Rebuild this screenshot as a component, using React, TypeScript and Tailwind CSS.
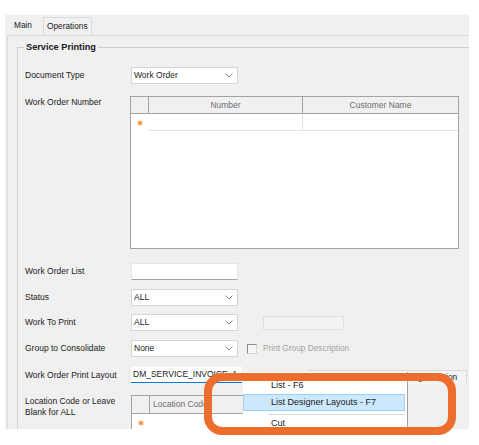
import React from "react";

const Chevron = () => (
  <svg width="8" height="5" viewBox="0 0 8 5" className="shrink-0">
    <path d="M0.5 0.5 L4 4 L7.5 0.5" fill="none" stroke="#8a8a8a" strokeWidth="1" />
  </svg>
);

const Star = () => (
  <svg width="6" height="6" viewBox="0 0 6 6">
    <g stroke="#f59443" strokeWidth="1.3" strokeLinecap="round">
      <line x1="3" y1="0.9" x2="3" y2="5.1" />
      <line x1="1.1" y1="1.9" x2="4.9" y2="4.1" />
      <line x1="1.1" y1="4.1" x2="4.9" y2="1.9" />
    </g>
  </svg>
);

const Combo = ({ value }: { value: string }) => (
  <div className="w-[107px] h-[17px] bg-white border border-[#d4d4d4] flex items-center justify-between pl-[2px] pr-[4px] text-[8.5px] text-[#1a1a1a]">
    <span>{value}</span>
    <Chevron />
  </div>
);

export default function App() {
  return (
    <div
      className="w-[479px] h-[445px] bg-white relative overflow-hidden text-[#1a1a1a]"
      style={{ fontFamily: '"Liberation Sans", Arial, sans-serif' }}
    >
      <div className="ml-[5px] mt-[15px] w-[464px] h-[414px] bg-[#f0f0f0] flex flex-col overflow-hidden">
        {/* tabs */}
        <div className="h-[20px] flex items-end shrink-0">
          <div className="ml-[2px] w-[36px] h-[20px] pl-[7px] flex items-center text-[8.3px]">Main</div>
          <div className="h-[18px] px-[3px] flex items-center text-[8.3px] border-t border-l border-r border-[#dcdcdc]">
            Operations
          </div>
        </div>
        {/* tab page */}
        <div className="ml-[2px] flex-1 border-t border-l border-[#dadada] pl-[9px] pt-[11px]">
          <div className="relative border-t border-l border-[#cfcfcf] h-[400px] pl-[7px] pt-[19px]">
            <span className="absolute left-[6px] top-[-7px] px-[2px] bg-[#f0f0f0] font-bold text-[9.2px] leading-[12px]">
              Service Printing
            </span>

            {/* Document Type */}
            <div className="flex items-center h-[17px]">
              <div className="w-[106px] text-[8.5px]">Document Type</div>
              <Combo value="Work Order" />
            </div>

            {/* Work Order Number */}
            <div className="flex mt-[12px]">
              <div className="w-[105px] text-[8.5px] leading-[10px] pt-[1px]">Work Order Number</div>
              <div className="w-[329px] h-[153px] bg-white border border-[#a3a3a3] flex flex-col">
                <div className="h-[17px] flex bg-[#f0f0f0] border-b border-[#a3a3a3] text-[8.5px] text-[#6d6d6d]">
                  <div className="w-[18px] border-r border-[#a3a3a3]" />
                  <div className="w-[154px] border-r border-[#a3a3a3] flex items-center justify-center">Number</div>
                  <div className="flex-1 flex items-center justify-center">Customer Name</div>
                </div>
                <div className="h-[17px] flex">
                  <div className="w-[18px] flex items-center justify-center">
                    <Star />
                  </div>
                  <div className="w-[154px] border-r border-b border-[#e2e2e2]" />
                  <div className="flex-1 border-b border-[#e2e2e2]" />
                </div>
              </div>
            </div>

            {/* Work Order List */}
            <div className="flex items-center h-[17px] mt-[14px]">
              <div className="w-[106px] text-[8.5px]">Work Order List</div>
              <div className="w-[107px] h-[17px] bg-white border border-[#e6e6e6] border-b-[#a5a5a5]" />
            </div>

            {/* Status */}
            <div className="flex items-center h-[17px] mt-[9px]">
              <div className="w-[106px] text-[8.5px]">Status</div>
              <Combo value="ALL" />
            </div>

            {/* Work To Print */}
            <div className="flex items-center h-[17px] mt-[8px]">
              <div className="w-[106px] text-[8.5px]">Work To Print</div>
              <Combo value="ALL" />
              <div className="ml-[25px] w-[81px] h-[14px] bg-[#f3f3f3] border border-[#e1e1e1]" />
            </div>

            {/* Group to Consolidate */}
            <div className="flex items-center h-[17px] mt-[9px]">
              <div className="w-[106px] text-[8.5px]">Group to Consolidate</div>
              <Combo value="None" />
              <div className="ml-[9px] w-[10px] h-[10px] border border-[#8c8c8c] border-r-[#d8d8d8] border-b-[#d8d8d8] bg-[#f6f6f6]" />
              <span className="ml-[6px] text-[8.3px] text-[#a2a2a2]">Print Group Description</span>
            </div>

            {/* Work Order Print Layout */}
            <div className="flex items-start h-[16px] mt-[10px]">
              <div className="w-[106px] h-[16px] flex items-center text-[8.5px]">Work Order Print Layout</div>
              <div className="w-[111px] h-[16px] bg-white border-b border-[#0078d7] flex items-center pl-[2px] text-[8.5px] overflow-hidden whitespace-nowrap">
                DM_SERVICE_INVOICE_1
              </div>
              <div className="ml-[66px] mt-[3px] w-[159px] h-[14px] bg-[#f4f4f4] border border-[#dcdcdc] border-b-0 flex items-center pl-[2px] text-[8.3px] whitespace-nowrap overflow-hidden">
                Create Layout and Add Change Section
              </div>
            </div>

            {/* Location */}
            <div className="flex mt-[12px]">
              <div className="w-[106px] text-[8.5px] leading-[11px] pt-[1px]">
                Location Code or Leave
                <br />
                Blank for ALL
              </div>
              <div className="w-[240px] h-[80px] bg-white border border-[#a3a3a3] flex flex-col">
                <div className="h-[18px] flex bg-[#f0f0f0] border-b border-[#a3a3a3] text-[8.5px] text-[#6d6d6d]">
                  <div className="w-[18px] border-r border-[#a3a3a3]" />
                  <div className="w-[100px] border-r border-[#a3a3a3] flex items-center pl-[3px]">Location Code</div>
                </div>
                <div className="h-[17px] flex">
                  <div className="w-[18px] flex items-center justify-center">
                    <Star />
                  </div>
                  <div className="w-[100px] border-r border-b border-[#e2e2e2]" />
                </div>
              </div>
            </div>
          </div>
        </div>
      </div>

      {/* context menu */}
      <div className="absolute left-[243px] top-[372px] w-[165px] h-[58px] bg-white border-r border-[#a0a0a0] pt-[5px] text-[9px] text-[#1a1a1a]">
        <div className="h-[17px] flex items-center pl-[28px]">List - F6</div>
        <div className="w-[162px] h-[17px] flex items-center pl-[27px] bg-[#cce8ff] border border-[#99d1ff]">
          List Designer Layouts - F7
        </div>
        <div className="ml-[25px] mr-[2px] mt-[3px] h-px bg-[#d7d7d7]" />
        <div className="h-[17px] flex items-center pl-[28px]">Cut</div>
      </div>

      {/* orange highlight */}
      <div className="absolute left-[204px] top-[373px] w-[252px] h-[62px] border-[8px] border-[#ec6d2e] rounded-[18px]" />
    </div>
  );
}
